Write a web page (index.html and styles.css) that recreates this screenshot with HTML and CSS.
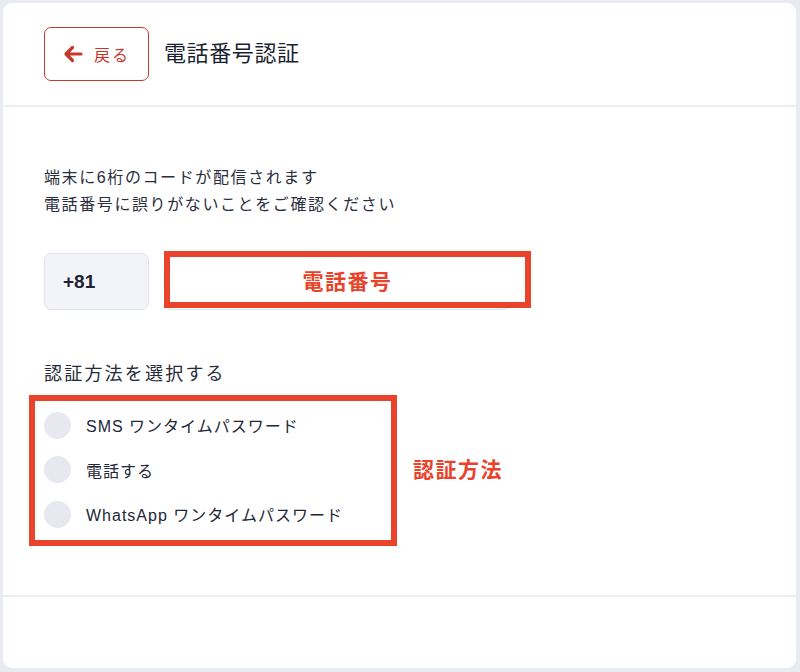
FILE: index.html
```html
<!DOCTYPE html>
<html lang="ja">
<head>
<meta charset="utf-8">
<title>電話番号認証</title>
<link rel="stylesheet" href="styles.css">
</head>
<body>
<div class="card">
  <header class="header">
    <button class="back" type="button">
      <svg class="back-icon" width="20" height="18" viewBox="0 0 20 18" aria-hidden="true">
        <path d="M18 9H3M9.5 2.5L3 9l6.5 6.5" fill="none" stroke="currentColor" stroke-width="3.2" stroke-linecap="round" stroke-linejoin="round"/>
      </svg>
      <span class="back-label">戻る</span>
    </button>
    <h1 class="title">電話番号認証</h1>
  </header>
  <main class="main">
    <p class="desc">端末に6桁のコードが配信されます<br>電話番号に誤りがないことをご確認ください</p>
    <div class="phone-row">
      <div class="cc">+81</div>
      <div class="phone-input"></div>
      <div class="note note-phone">電話番号</div>
    </div>
    <div class="section-label">認証方法を選択する</div>
    <div class="methods">
      <label class="method"><span class="radio"></span><span class="method-label">SMS ワンタイムパスワード</span></label>
      <label class="method"><span class="radio"></span><span class="method-label">電話する</span></label>
      <label class="method"><span class="radio"></span><span class="method-label">WhatsApp ワンタイムパスワード</span></label>
      <div class="note-frame"></div>
      <div class="note-text">認証方法</div>
    </div>
  </main>
  <footer class="footer"></footer>
</div>
</body>
</html>
```

FILE: styles.css
```css
* { box-sizing: border-box; }
html, body { margin: 0; }
body {
  background: #e9ebf3;
  padding: 3px 4px 4px 3px;
  font-family: "Liberation Sans", "Noto Sans CJK JP", sans-serif;
  color: #1e2233;
  height: 672px;
}
.card {
  background: #fff;
  border-radius: 9px;
  height: 665px;
  display: flex;
  flex-direction: column;
  overflow: hidden;
}
.header {
  height: 104px;
  border-bottom: 2px solid #eceef4;
  padding: 24px 0 0 41px;
  display: flex;
  align-items: flex-start;
  gap: 15px;
}
.back {
  width: 105px;
  height: 54px;
  border: 1px solid #c93a2e;
  border-radius: 7px;
  background: #fff;
  color: #c8372c;
  display: flex;
  align-items: center;
  padding: 0 0 0 18px;
  gap: 11px;
  font-family: inherit;
  cursor: pointer;
}
.back-icon { display: block; }
.back-label {
  font-size: 16px;
  letter-spacing: 2px;
}
.title {
  margin: 0;
  font-weight: normal;
  font-size: 22px;
  letter-spacing: 0.6px;
  line-height: 54px;
  color: #1b1f30;
}
.main {
  flex: 1;
  padding: 57px 0 0 41px;
}
.desc {
  margin: 0;
  font-size: 16px;
  line-height: 27px;
  letter-spacing: 1.6px;
  color: #2a2d3c;
}
.phone-row {
  position: relative;
  display: flex;
  gap: 16px;
  margin-top: 35px;
}
.cc {
  width: 105px;
  height: 57px;
  background: #f3f4f9;
  border: 1px solid #e2e4ec;
  border-radius: 7px;
  display: flex;
  align-items: center;
  padding-left: 18px;
  font-weight: bold;
  font-size: 19px;
  color: #1e2233;
}
.phone-input {
  width: 345px;
  height: 57px;
  border: 1px solid #e2e4ec;
  border-radius: 7px;
  background: #fff;
}
.note-phone {
  position: absolute;
  left: 120px;
  top: -2px;
  width: 367px;
  height: 57px;
  border: 6px solid #e9442b;
  background: #fff;
  display: flex;
  align-items: center;
  justify-content: center;
  color: #e9442b;
  font-weight: bold;
  font-size: 21px;
  letter-spacing: 1.5px;
}
.section-label {
  margin-top: 51px;
  font-size: 18px;
  line-height: 26px;
  letter-spacing: 2.2px;
  color: #262a3a;
}
.methods {
  position: relative;
  margin-top: 16px;
  width: 340px;
}
.method {
  display: flex;
  align-items: center;
  gap: 15px;
  height: 44.5px;
}
.radio {
  width: 27px;
  height: 27px;
  border-radius: 50%;
  background: #e8e9f0;
  flex: none;
}
.method-label {
  font-size: 16px;
  letter-spacing: 1px;
  color: #222636;
}
.note-frame {
  position: absolute;
  left: -15px;
  top: -8px;
  width: 368px;
  height: 151px;
  border: 6.5px solid #e9442b;
}
.note-text {
  position: absolute;
  left: 369px;
  top: 55px;
  white-space: nowrap;
  color: #e9442b;
  font-weight: bold;
  font-size: 21px;
  letter-spacing: 1.5px;
  line-height: 24px;
}
.footer {
  height: 73px;
  border-top: 2px solid #eceef4;
  flex: none;
}
```
